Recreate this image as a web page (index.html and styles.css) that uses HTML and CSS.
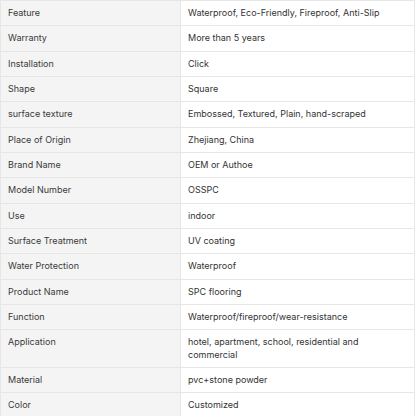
FILE: index.html
```html
<!DOCTYPE html>
<html>
<head>
<meta charset="utf-8">
<link rel="stylesheet" href="styles.css">
</head>
<body>
<table class="spec">
<tbody>
<tr><td class="k">Feature</td><td class="v">Waterproof, Eco-Friendly, Fireproof, Anti-Slip</td></tr>
<tr><td class="k">Warranty</td><td class="v">More than 5 years</td></tr>
<tr><td class="k">Installation</td><td class="v">Click</td></tr>
<tr><td class="k">Shape</td><td class="v">Square</td></tr>
<tr><td class="k">surface texture</td><td class="v">Embossed, Textured, Plain, hand-scraped</td></tr>
<tr><td class="k">Place of Origin</td><td class="v">Zhejiang, China</td></tr>
<tr><td class="k">Brand Name</td><td class="v">OEM or Authoe</td></tr>
<tr><td class="k">Model Number</td><td class="v">OSSPC</td></tr>
<tr><td class="k">Use</td><td class="v">indoor</td></tr>
<tr><td class="k">Surface Treatment</td><td class="v">UV coating</td></tr>
<tr><td class="k">Water Protection</td><td class="v">Waterproof</td></tr>
<tr><td class="k">Product Name</td><td class="v">SPC flooring</td></tr>
<tr><td class="k">Function</td><td class="v">Waterproof/fireproof/wear-resistance</td></tr>
<tr><td class="k">Application</td><td class="v">hotel, apartment, school, residential and commercial</td></tr>
<tr><td class="k">Material</td><td class="v">pvc+stone powder</td></tr>
<tr><td class="k">Color</td><td class="v">Customized</td></tr>
</tbody>
</table>
</body>
</html>
```
FILE: styles.css
```css
html, body {
  margin: 0;
  padding: 0;
  background: #ffffff;
}
.spec {
  border-collapse: collapse;
  width: 415px;
  table-layout: fixed;
  font-family: "Inter", sans-serif;
  font-size: 9px;
  line-height: 12.33px;
  color: #333333;
}
.spec td {
  border: 1px solid #e6e6e6;
  padding: 6px 7px;
  vertical-align: top;
  text-align: left;
}
.spec .k {
  width: 165px;
  background: #f4f4f4;
  color: #3a3a3a;
}
.spec .v {
  background: #ffffff;
  padding-right: 26px;
}
```
